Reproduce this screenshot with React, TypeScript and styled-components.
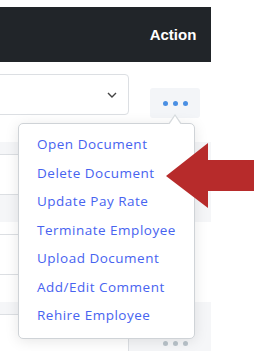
import styled, { createGlobalStyle } from 'styled-components';

const GlobalStyle = createGlobalStyle`
	html, body {
		margin: 0;
		padding: 0;
		background: #ffffff;
		overflow: hidden;
	}
	body {
		font-family: 'Open Sans', 'Liberation Sans', sans-serif;
	}
`;

const Page = styled.div`
	position: relative;
	width: 270px;
	height: 351px;
	padding-top: 7px;
	box-sizing: border-box;
	overflow: hidden;
`;

const Table = styled.div`
	width: 231px;
	margin-left: -20px;
`;

const HeaderRow = styled.div`
	display: grid;
	grid-template-columns: 150px 81px;
	height: 55px;
	background: #212529;
`;

const HeaderCell = styled.div`
	display: flex;
	align-items: center;
	justify-content: center;
	padding-left: 5px;
	color: #ffffff;
	font-family: 'Liberation Sans', Arial, sans-serif;
	font-weight: 700;
	font-size: 15px;
`;

const Row = styled.div<{ striped?: boolean }>`
	display: grid;
	grid-template-columns: 150px 81px;
	height: 80px;
	background: ${(p) => (p.striped ? '#f5f6f8' : '#ffffff')};
`;

const SelectCell = styled.div`
	padding: 12px 1px 0 12px;
`;

const SelectBox = styled.div`
	height: 41px;
	box-sizing: border-box;
	border: 1px solid #dcdfe3;
	border-radius: 4px;
	background: #ffffff;
	display: flex;
	align-items: center;
	justify-content: flex-end;
	padding-right: 11px;
`;

const ActionCell = styled.div`
	position: relative;
	display: flex;
	justify-content: flex-end;
	align-items: flex-start;
	padding: 26px 11px 0 0;
`;

const DotsButton = styled.div<{ active?: boolean }>`
	position: relative;
	width: 50px;
	height: 30px;
	border-radius: 3px;
	background: ${(p) => (p.active ? '#f3f5f8' : 'transparent')};
	display: flex;
	align-items: center;
	justify-content: center;
	gap: 5px;
`;

const Dot = styled.span<{ active?: boolean }>`
	width: 5px;
	height: 5px;
	border-radius: 50%;
	background: ${(p) => (p.active ? '#4a8fe3' : '#b9c3ca')};
`;

const Menu = styled.div`
	position: absolute;
	top: calc(100% + 5px);
	right: 5px;
	width: 177px;
	box-sizing: border-box;
	padding: 6px 0 8px;
	background: #ffffff;
	border: 1px solid #cfd3d7;
	border-radius: 5px;
	box-shadow: 0 2px 14px rgba(0, 0, 0, 0.1);
	z-index: 5;

	&::before,
	&::after {
		content: '';
		position: absolute;
		right: 12px;
		width: 0;
		height: 0;
		border-style: solid;
	}
	&::before {
		top: -10px;
		border-width: 0 7px 10px 7px;
		border-color: transparent transparent #d6dadd transparent;
	}
	&::after {
		top: -8px;
		right: 13px;
		border-width: 0 6px 9px 6px;
		border-color: transparent transparent #ffffff transparent;
	}
`;

const MenuItem = styled.div`
	height: 28.5px;
	display: flex;
	align-items: center;
	padding-left: 18px;
	color: #4763f0;
	font-size: 13.5px;
	letter-spacing: 0.5px;
	white-space: nowrap;
`;

const Pointer = styled.svg`
	position: absolute;
	left: 166px;
	top: 143px;
	z-index: 6;
`;

const Chevron = () => (
	<svg width="10" height="6" viewBox="0 0 10 6">
		<path d="M1 1l4 4 4-4" fill="none" stroke="#444" strokeWidth="1.4" />
	</svg>
);

const menuItems = [
	'Open Document',
	'Delete Document',
	'Update Pay Rate',
	'Terminate Employee',
	'Upload Document',
	'Add/Edit Comment',
	'Rehire Employee',
];

const Dots = ({ active }: { active?: boolean }) => (
	<>
		<Dot active={active} />
		<Dot active={active} />
		<Dot active={active} />
	</>
);

const App = () => {
	return (
		<Page>
			<GlobalStyle />
			<Table>
				<HeaderRow>
					<div />
					<HeaderCell>Action</HeaderCell>
				</HeaderRow>
				<Row>
					<SelectCell>
						<SelectBox>
							<Chevron />
						</SelectBox>
					</SelectCell>
					<ActionCell>
						<DotsButton active>
							<Dots active />
							<Menu>
								{menuItems.map((item) => (
									<MenuItem key={item}>{item}</MenuItem>
								))}
							</Menu>
						</DotsButton>
					</ActionCell>
				</Row>
				<Row striped>
					<SelectCell>
						<SelectBox>
							<Chevron />
						</SelectBox>
					</SelectCell>
					<ActionCell>
						<DotsButton>
							<Dots />
						</DotsButton>
					</ActionCell>
				</Row>
				<Row>
					<SelectCell>
						<SelectBox>
							<Chevron />
						</SelectBox>
					</SelectCell>
					<ActionCell>
						<DotsButton>
							<Dots />
						</DotsButton>
					</ActionCell>
				</Row>
				<Row striped>
					<SelectCell>
						<SelectBox>
							<Chevron />
						</SelectBox>
					</SelectCell>
					<ActionCell>
						<DotsButton>
							<Dots />
						</DotsButton>
					</ActionCell>
				</Row>
			</Table>
			<Pointer width="88" height="65" viewBox="0 0 88 65">
				<polygon points="0,33 42,0 42,17 88,17 88,48 42,48 42,65" fill="#b72b2b" />
			</Pointer>
		</Page>
	);
};

export default App;
